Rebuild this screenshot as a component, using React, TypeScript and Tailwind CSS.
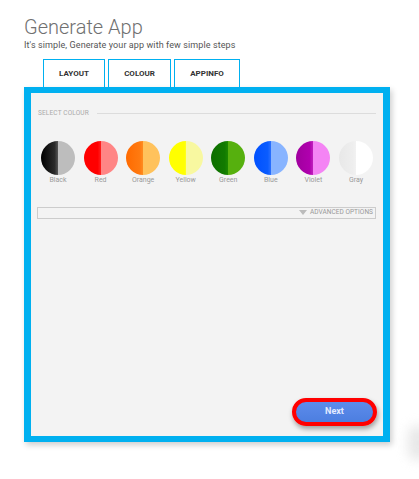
import React from 'react';

const colours = [
  { name: 'Black', bg: 'bg-[linear-gradient(to_right,#000000_0%,#2a2a2a_40%,#555555_50%,#bdbdbd_50%,#bdbdbd_100%)]' },
  { name: 'Red', bg: 'bg-[linear-gradient(to_right,#ff0000_0%,#ff0000_40%,#ff2020_50%,#ff8585_50%,#ff8585_100%)]' },
  { name: 'Orange', bg: 'bg-[linear-gradient(to_right,#ff6a00_0%,#ff7a10_40%,#ff8c20_50%,#ffc25c_50%,#ffc25c_100%)]' },
  { name: 'Yellow', bg: 'bg-[linear-gradient(to_right,#ffff00_0%,#ffff00_45%,#ffff20_50%,#f8f8a0_50%,#f8f8a0_100%)]' },
  { name: 'Green', bg: 'bg-[linear-gradient(to_right,#0e6e00_0%,#117a00_40%,#1c8800_50%,#56b00e_50%,#56b00e_100%)]' },
  { name: 'Blue', bg: 'bg-[linear-gradient(to_right,#0050ff_0%,#0a5cff_40%,#2a70ff_50%,#88b4ff_50%,#88b4ff_100%)]' },
  { name: 'Violet', bg: 'bg-[linear-gradient(to_right,#a0009e_0%,#b000ae_40%,#c020be_50%,#f484f4_50%,#f484f4_100%)]' },
  { name: 'Gray', bg: 'bg-[linear-gradient(to_right,#e8e8e8_0%,#eeeeee_40%,#f2f2f2_50%,#ffffff_50%,#ffffff_100%)]' },
];

const tabs = [
  { label: 'LAYOUT', w: 'w-[62px]' },
  { label: 'COLOUR', w: 'w-[63px]' },
  { label: 'APPINFO', w: 'w-[66px]' },
];

export default function App() {
  return (
    <div className="relative w-[419px] h-[479px] bg-white overflow-hidden font-['Roboto',sans-serif]">
      <div className="pl-[24px] pt-[14px]">
        <h1 className="text-[20px] leading-[26px] font-light text-[#707070]">Generate App</h1>
        <p className="text-[9px] leading-[11px] text-[#555] tracking-[0.1px]">
          It's simple, Generate your app with few simple steps
        </p>

        <div className="flex gap-[3px] pl-[19px] mt-[8px]">
          {tabs.map((t) => (
            <div
              key={t.label}
              className={`${t.w} h-[28px] border border-b-0 border-[#00b0f0] flex items-center justify-center text-[8px] font-bold text-[#333]`}
            >
              {t.label}
            </div>
          ))}
        </div>

        <div className="w-[366px] h-[355px] border-x-[7px] border-y-[6px] border-[#00b0f0] bg-[#f3f3f3] shadow-[2px_3px_6px_rgba(0,0,0,0.2)] flex flex-col">
          <div className="flex items-center pl-[7px] pr-[7px] mt-[16px]">
            <span className="text-[6.5px] text-[#aaa] tracking-[0.15px]">SELECT COLOUR</span>
            <div className="flex-1 h-[1px] bg-[#dcdcdc] ml-[8px]" />
          </div>

          <div className="flex justify-between px-[10px] mt-[22px]">
            {colours.map((c) => (
              <div key={c.name} className="flex flex-col items-center w-[34px]">
                <div className={`w-[34px] h-[34px] rounded-full ${c.bg}`} />
                <span className="text-[7px] leading-[9px] mt-[1px] text-[#9a9a9a]">{c.name}</span>
              </div>
            ))}
          </div>

          <div className="ml-[6px] mr-[7px] mt-[22px] h-[12px] border border-[#cccccc] flex items-center justify-end pr-[2px]">
            <svg width="8" height="5" viewBox="0 0 8 5" className="mr-[3px]">
              <polygon points="0,0 8,0 4,5" fill="#bbbbbb" />
            </svg>
            <span className="text-[6.5px] text-[#999] tracking-[0.05px]">ADVANCED OPTIONS</span>
          </div>

          <div className="mt-auto flex justify-end pr-[6px] pb-[10px]">
            <button className="w-[85px] h-[28px] rounded-full border-[4px] border-[#ff0000] bg-[linear-gradient(to_bottom,#5d8ceb,#4c7ee0)] shadow-[1px_3px_5px_rgba(0,0,0,0.35)] text-[9px] font-bold text-[#e4ebff]">
              Next
            </button>
          </div>
        </div>
      </div>

      <div className="absolute left-[408px] top-[425px] w-[20px] h-[36px] rounded-full bg-[#d8d8d8] blur-[6px] opacity-60" />
    </div>
  );
}
